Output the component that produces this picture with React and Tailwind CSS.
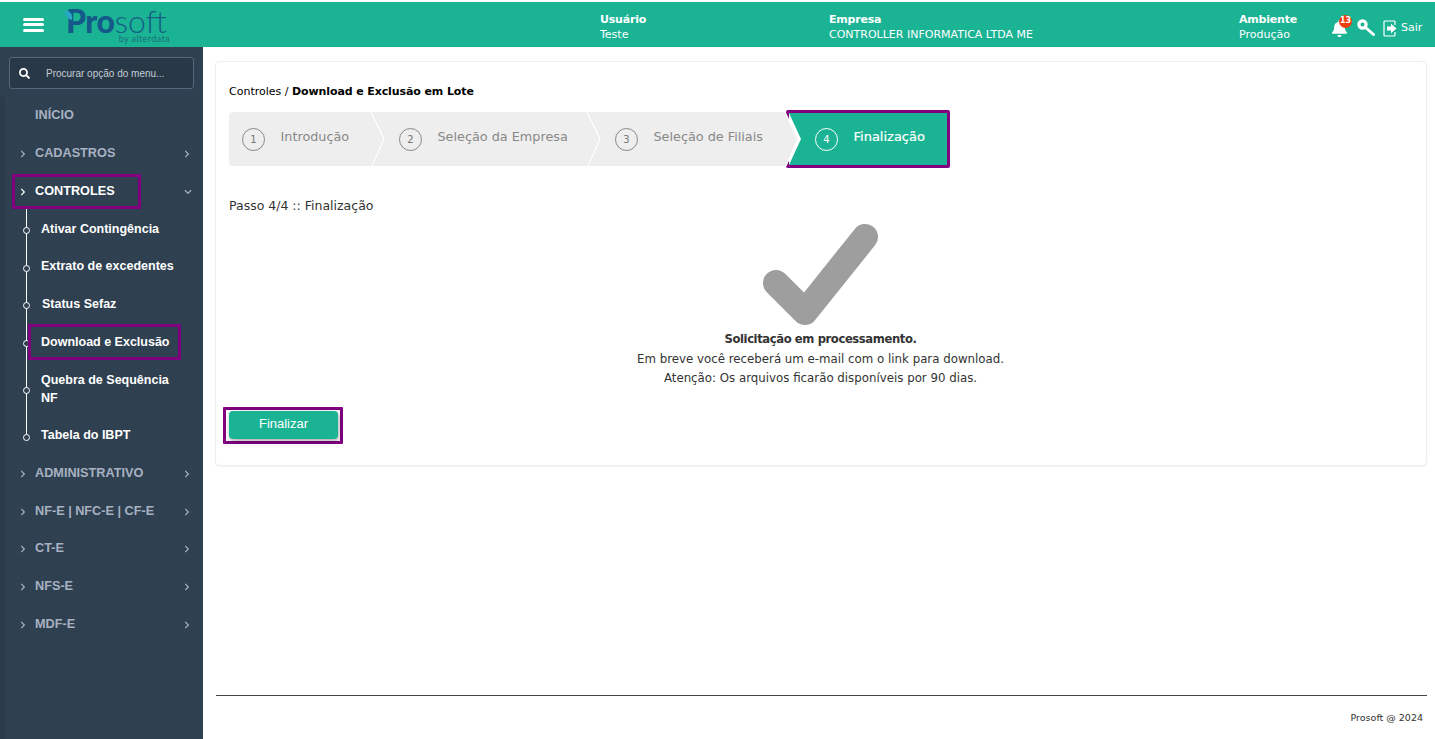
import React from "react";
import { FaBell, FaSearch, FaChevronRight, FaChevronDown } from "react-icons/fa";

const menuTop = [{ label: "INÍCIO", plain: true }, { label: "CADASTROS" }];
const menuBottom = [
    { label: "ADMINISTRATIVO", h: "h-[38px]" },
    { label: "NF-E | NFC-E | CF-E", h: "h-[38px]" },
    { label: "CT-E", h: "h-[37px]" },
    { label: "NFS-E", h: "h-[38px]" },
    { label: "MDF-E", h: "h-[38px]" },
];
const subItems = [
    { label: "Ativar Contingência", h: "h-[38px]" },
    { label: "Extrato de excedentes", h: "h-[37px]" },
    { label: "Status Sefaz", h: "h-[38px]", indent: "pl-[42px]" },
    { label: "Download e Exclusão", h: "h-[38px]", marked: true },
    { label: "Quebra de Sequência NF", h: "h-[56px]" },
    { label: "Tabela do IBPT", h: "h-[37px]" },
];
const steps = [
    { n: 1, label: "Introdução", w: "w-[143px]", pl: "pl-[13px]" },
    { n: 2, label: "Seleção da Empresa", w: "w-[216px]", pl: "pl-[27px]" },
    { n: 3, label: "Seleção de Filiais", w: "w-[198px]", pl: "pl-[27px]" },
];

const Chevron = () => (
    <svg className="absolute right-[-14px] top-0 z-10" width="16" height="54" viewBox="0 0 16 54">
        <path d="M1 0 L14 27 L2 54" fill="#eeeeee" stroke="none" />
        <path d="M1 0 L14 27 L2 54" fill="none" stroke="#ffffff" strokeWidth="1.2" />
    </svg>
);

const Logo = () => (
    <div className="relative ml-[24px] h-[40px] w-[102px] font-['Lato',sans-serif] text-[#14598a]">
        <div className="ml-[-2px] mt-[4px] flex items-baseline leading-[24px]">
            <span className="text-[32px] font-black tracking-[-0.5px]">Pro</span>
            <span className="text-[32px] font-light text-[#175f86]">soft</span>
        </div>
        <span className="absolute right-0 top-[29px] text-[9px] leading-none tracking-[0.4px] text-[#1c6f78]">by alterdata</span>
        <svg className="absolute left-[-3px] top-[6px]" width="8" height="9" viewBox="0 0 8 9">
            <path d="M0 0 C5 0 8 3 7 9 C3 8 0 5 0 0 Z" fill="#2aa6c8" />
        </svg>
    </div>
);

const MainItem = ({ label, plain, h = "h-[38px]" }) => (
    <div className={`flex items-center pt-[3px] text-[12.7px] font-bold text-[#a7b1c2] ${h}`}>
        <FaChevronRight className={plain ? "ml-[19px] text-[8px] opacity-0" : "ml-[19px] text-[8px]"} />
        <span className="ml-[8px] flex-1">{label}</span>
        {!plain && <FaChevronRight className="mr-[12px] text-[8px]" />}
    </div>
);

const App = () => {
    return (
        <div className="flex h-[739px] w-full flex-col overflow-hidden bg-white pt-[2px] font-['DejaVu_Sans',sans-serif]">
            <header className="flex h-[45px] shrink-0 items-center bg-[#1ab394] text-white">
                <div className="flex w-[203px] shrink-0 items-center pl-[23px]">
                    <div className="flex w-[21px] flex-col gap-[2.5px]">
                        <span className="h-[3px] rounded-sm bg-white" />
                        <span className="h-[3px] rounded-sm bg-white" />
                        <span className="h-[3px] rounded-sm bg-white" />
                    </div>
                    <Logo />
                </div>
                <div className="ml-[397px] w-[229px] pt-[4px] text-[11px] leading-[15px]">
                    <div className="font-bold tracking-[-0.2px]">Usuário</div>
                    <div>Teste</div>
                </div>
                <div className="w-[410px] pt-[4px] text-[11px] leading-[15px]">
                    <div className="font-bold tracking-[-0.2px]">Empresa</div>
                    <div>CONTROLLER INFORMATICA LTDA ME</div>
                </div>
                <div className="w-[92px] pt-[4px] text-[11px] leading-[15px]">
                    <div className="font-bold tracking-[-0.2px]">Ambiente</div>
                    <div>Produção</div>
                </div>
                <div className="relative mt-[7px]">
                    <FaBell className="text-[17px]" />
                    <span className="absolute right-[-4px] top-[-5px] flex h-[13px] w-[13px] items-center justify-center rounded-full bg-[#f03e0c] text-[8px] font-bold leading-none">13</span>
                </div>
                <svg className="ml-[9px] mt-[7px]" width="18" height="18" viewBox="0 0 18 18">
                    <circle cx="5.5" cy="5.5" r="3.6" fill="none" stroke="#fff" strokeWidth="3.2" />
                    <path d="M8 8 L16.5 15.5" stroke="#fff" strokeWidth="3" strokeLinecap="round" />
                </svg>
                <svg className="ml-[8px] mt-[7px]" width="14" height="17" viewBox="0 0 14 17">
                    <path d="M12 5 V2 a1 1 0 0 0 -1 -1 H2 a1 1 0 0 0 -1 1 V15 a1 1 0 0 0 1 1 H11 a1 1 0 0 0 1 -1 V12" fill="none" stroke="#fff" strokeWidth="1.2" />
                    <path d="M4 6.5 H8 V3.8 L13.5 8.5 L8 13.2 V10.5 H4 Z" fill="#fff" />
                </svg>
                <span className="ml-[4px] mt-[7px] text-[11px]">Sair</span>
            </header>

            <div className="flex min-h-0 flex-1">
                <aside className="relative w-[203px] shrink-0 bg-[#2f4050] pt-[10px]">
                    <div className="mx-[9px] flex h-[32px] items-center rounded-[3px] border border-[#55667d] bg-[#293846] pl-[9px] font-['Liberation_Sans',sans-serif] text-[10px] text-[#c4ccd6]">
                        <FaSearch className="text-[11px] text-white" />
                        <span className="ml-[16px]">Procurar opção do menu...</span>
                    </div>
                    <div className="absolute bottom-0 left-0 top-[50px] w-[5px] bg-[#2c3b49]" />
                    <nav className="relative mt-[6px] font-['Liberation_Sans',sans-serif]">
                        {menuTop.map((m) => (
                            <MainItem key={m.label} label={m.label} plain={m.plain} />
                        ))}
                        <div className="flex h-[38px] items-center text-[12.7px] font-bold text-white">
                            <div className="ml-[12px] mt-[3px] flex h-[35px] w-[129px] items-center border-[3px] border-[#800080] pl-[4px]">
                                <FaChevronRight className="text-[8px]" />
                                <span className="ml-[8px]">CONTROLES</span>
                            </div>
                            <FaChevronDown className="ml-[43px] mt-[3px] text-[8px] text-[#a7b1c2]" />
                        </div>
                        <div className="relative">
                            <div className="absolute bottom-[16px] left-[26px] top-0 w-px bg-white" />
                            {subItems.map((s) => (
                                <div key={s.label} className={`relative flex items-center pr-[26px] pt-[1px] text-[12.5px] font-bold leading-[18px] text-white ${s.h} ${s.indent || "pl-[41px]"}`}>
                                    <span className="absolute left-[23px] top-1/2 z-10 mt-[-1px] h-[7px] w-[7px] rounded-full border border-white bg-[#2f4050]" />
                                    {s.marked ? (
                                        <span className="absolute left-[28px] top-[2px] z-20 flex h-[36px] w-[153px] items-center border-[3px] border-[#800080] bg-[#2f4050] pl-[10px]">{s.label}</span>
                                    ) : (
                                        s.label
                                    )}
                                </div>
                            ))}
                        </div>
                        {menuBottom.map((m) => (
                            <MainItem key={m.label} label={m.label} h={m.h} />
                        ))}
                    </nav>
                </aside>

                <main className="flex min-w-0 flex-1 flex-col text-[#333]">
                    <section className="ml-[12px] mr-[8px] mt-[14px] h-[405px] rounded-[4px] border border-[#eeeeee] bg-white pl-[13px] pt-[22px] shadow-[0_1px_2px_rgba(0,0,0,0.05)]">
                        <div className="text-[11px] leading-[16px] text-black">
                            Controles / <b className="tracking-[-0.1px]">Download e Exclusão em Lote</b>
                        </div>
                        <div className="mt-[12px] flex h-[54px]">
                            {steps.map((s, i) => (
                                <div key={s.n} className={`relative flex h-full items-center gap-[15.5px] bg-[#eeeeee] text-[#888888] ${s.w} ${s.pl} ${i === 0 ? "rounded-l-[4px]" : ""}`}>
                                    <span className="flex h-[23px] w-[23px] shrink-0 items-center justify-center rounded-full border border-[#888888] text-[10px] text-[#777]">{s.n}</span>
                                    <span className="mt-[-5px] whitespace-nowrap text-[12.8px]">{s.label}</span>
                                    <Chevron />
                                </div>
                            ))}
                            <div className="relative mt-[-2px] box-content h-[52px] w-[158px] rounded-[2px] border-[3px] border-[#800080] bg-[#1ab394] text-white">
                                <svg className="absolute left-0 top-0" width="13" height="52" viewBox="0 0 13 52">
                                    <path d="M0 0 L12 26 L0 52 Z" fill="#ffffff" />
                                </svg>
                                <div className="flex h-full items-center gap-[15.5px] pl-[26px]">
                                    <span className="flex h-[23px] w-[23px] shrink-0 items-center justify-center rounded-full border border-white text-[10px]">4</span>
                                    <span className="mt-[-5px] text-[13px] [-webkit-text-stroke:0.2px_white]">Finalização</span>
                                </div>
                            </div>
                        </div>
                        <div className="mt-[32px] text-[12.5px] leading-[16px] text-[#333]">Passo 4/4 :: Finalização</div>
                        <div className="mr-[14px] mt-[10px] flex flex-col items-center text-[11.8px] leading-[19.5px]">
                            <svg width="116" height="102" viewBox="0 0 116 102">
                                <path d="M13 59 L42 88 L102 13" fill="none" stroke="#9e9e9e" strokeWidth="26" strokeLinecap="round" strokeLinejoin="round" />
                            </svg>
                            <div className="mt-[4px] text-[11.6px] font-bold tracking-[-0.4px]">Solicitação em processamento.</div>
                            <div>Em breve você receberá um e-mail com o link para download.</div>
                            <div>Atenção: Os arquivos ficarão disponíveis por 90 dias.</div>
                        </div>
                        <div className="ml-[-6px] mt-[18px] flex h-[37px] w-[120px] items-center rounded-[1px] border-[3px] border-[#800080] pl-[3px]">
                            <button className="h-[28px] w-[109px] rounded-[4px] bg-[#1ab394] pb-[2px] font-['Liberation_Sans',sans-serif] text-[13px] text-white shadow-[1px_2px_5px_rgba(0,0,0,0.35)]">Finalizar</button>
                        </div>
                    </section>
                    <div className="flex-1" />
                    <footer className="ml-[13px] mr-[8px] flex h-[44px] items-center justify-end border-t border-[#444] pr-[4px] pt-[2px] text-[9.5px] text-[#333]">
                        Prosoft @ 2024
                    </footer>
                </main>
            </div>
        </div>
    );
};

export default App;
